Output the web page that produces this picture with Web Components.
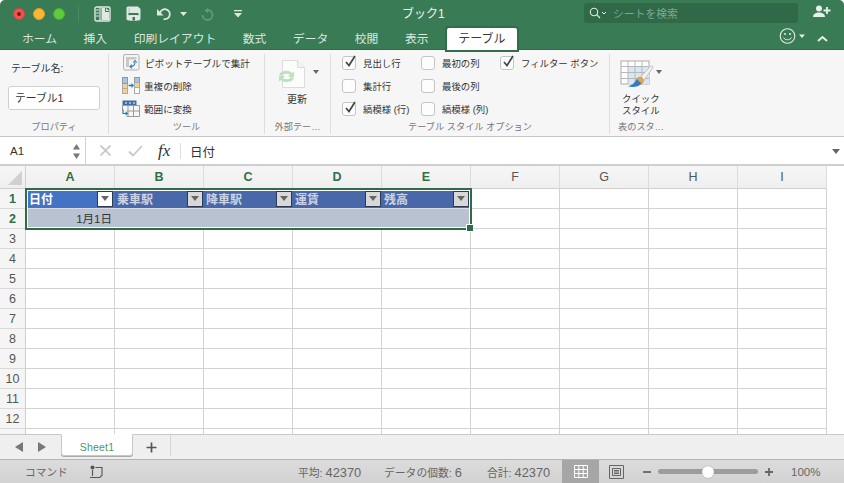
<!DOCTYPE html>
<html lang="ja">
<head>
<meta charset="utf-8">
<title>ブック1</title>
<style>
html, body { margin: 0; padding: 0; background: #fff; overflow: hidden; }
body { font-family: "Liberation Sans", "Noto Sans CJK JP", sans-serif; }
</style>
</head>
<body>
<xl-window>
  <xl-titlebar></xl-titlebar>
  <xl-tabs></xl-tabs>
  <xl-ribbon>
    <xl-group label="プロパティ" width="109">
      <xl-tablename></xl-tablename>
    </xl-group>
    <xl-group label="ツール" width="156">
      <xl-tools></xl-tools>
    </xl-group>
    <xl-group label="外部テー…" width="66">
      <xl-refresh></xl-refresh>
    </xl-group>
    <xl-group label="テーブル スタイル オプション" width="279">
      <xl-options></xl-options>
    </xl-group>
    <xl-group label="表のスタ…" width="62" last>
      <xl-quick></xl-quick>
    </xl-group>
  </xl-ribbon>
  <xl-formula></xl-formula>
  <xl-sheet></xl-sheet>
  <xl-sheetbar></xl-sheetbar>
  <xl-status></xl-status>
</xl-window>

<script>
const jp = `"Liberation Sans", "Noto Sans CJK JP", sans-serif`;

class XlWindow extends HTMLElement {
  constructor() {
    super();
    this.attachShadow({mode: "open"}).innerHTML = `
      <style>
        :host { display: flex; flex-direction: column; width: 844px; height: 483px; overflow: hidden;
                border-radius: 5px 5px 0 0; font-family: ${jp}; }
      </style>
      <slot></slot>`;
  }
}

class XlTitlebar extends HTMLElement {
  constructor() {
    super();
    this.attachShadow({mode: "open"}).innerHTML = `
      <style>
        :host { display: flex; align-items: center; height: 27px; flex: none; background: #387b54; color: #fff; position: relative; }
        .lights { display: flex; gap: 8px; margin-left: 13px; }
        .lights i { width: 12px; height: 12px; border-radius: 50%; display: flex; align-items: center; justify-content: center; box-sizing: border-box; }
        .r { background: #f2544d; border: 1px solid #d8453f; }
        .r::after { content: ""; width: 4px; height: 4px; border-radius: 50%; background: #7e1712; }
        .y { background: #fbb731; border: 1px solid #dc9f28; }
        .g { background: #5ecb3f; border: 1px solid #4aaf30; }
        .sep { width: 1px; height: 16px; background: #4a8a65; margin: 0 15px 0 13px; }
        svg { display: block; flex: none; }
        .title { position: absolute; left: 402px; top: 6px; font-size: 12px; line-height: 17px; color: #f0f5f2; }
        .search { position: absolute; left: 584px; top: 3px; width: 214px; height: 20px; border-radius: 3px; background: #2f6947; display: flex; align-items: center; box-sizing: border-box; padding-left: 5px; }
        .search span { margin-left: 6px; font-size: 10.800px; color: #7fa891; }
        .person { position: absolute; left: 813px; top: 5px; }
      </style>
      <div class="lights"><i class="r"></i><i class="y"></i><i class="g"></i></div>
      <div class="sep"></div>
      <svg width="17" height="16" viewBox="0 0 17 16"><rect x="1" y="1" width="15" height="14" rx="1.500" fill="none" stroke="#dfe9e3" stroke-width="1.400"/><path d="M6 1v14" stroke="#dfe9e3" stroke-width="1.200"/><path d="M2 4h3M2 7h3M2 10h3" stroke="#dfe9e3"/><path d="M7.500 2h4.500l3 3v9H7.500z" fill="#dfe9e3"/><path d="M11.500 2v3.500h3.500" fill="none" stroke="#387b54"/></svg>
      <svg style="margin-left:15px" width="15" height="15" viewBox="0 0 15 15"><path d="M.5 2A1.500 1.500 0 0 1 2 .5h10L14.500 3v9.500a2 2 0 0 1-2 2h-10a2 2 0 0 1-2-2z" fill="#dfe9e3"/><rect x="2.500" y="7" width="10" height="2.200" fill="#387b54"/><rect x="2.500" y="2" width="1" height="5" fill="#387b54" opacity=".3"/><rect x="4" y="9" width="7" height="5.500" fill="#dfe9e3"/><rect x="6.500" y="11" width="2.500" height="3.500" fill="#387b54"/></svg>
      <svg style="margin-left:15px" width="16" height="14" viewBox="0 0 16 14"><path d="M1 2v6.500h6.500z" fill="#dfe9e3"/><path d="M4 6a5 5 0 1 1 3.500 6" fill="none" stroke="#dfe9e3" stroke-width="1.800"/></svg>
      <svg style="margin-left:8px" width="7" height="4" viewBox="0 0 7 4"><path d="M0 0h7L3.500 4z" fill="#dfe9e3"/></svg>
      <svg style="margin-left:14px" width="13" height="14" viewBox="0 0 13 14"><path d="M7 1L3.500 3.500 7 6z" fill="#659a7c"/><path d="M6 3h1a5 5 0 1 1-5.500 5" fill="none" stroke="#659a7c" stroke-width="1.800"/></svg>
      <svg style="margin-left:20px" width="9" height="8" viewBox="0 0 9 8"><path d="M0 0h8v1.200H0z" fill="#dfe9e3"/><path d="M0 3h8L4 7.500z" fill="#dfe9e3"/></svg>
      <div class="title">ブック1</div>
      <div class="search">
        <svg width="18" height="12" viewBox="0 0 18 12"><circle cx="5" cy="5" r="3.700" fill="none" stroke="#e3ece7" stroke-width="1.100"/><path d="M7.700 7.700L11 11" stroke="#e3ece7" stroke-width="1.200"/><path d="M13 5l2 2 2-2" fill="none" stroke="#e3ece7"/></svg>
        <span>シートを検索</span>
      </div>
      <svg class="person" width="19" height="13" viewBox="0 0 19 13"><circle cx="6" cy="3.500" r="3" fill="#e8efeb"/><path d="M0 12c0-3 2.500-4.500 6-4.500S12 9 12 12z" fill="#e8efeb"/><path d="M14 2v7M10.500 5.500h7" stroke="#e8efeb" stroke-width="1.800"/></svg>`;
  }
}

class XlTabs extends HTMLElement {
  constructor() {
    super();
    const names = ["ホーム", "挿入", "印刷レイアウト", "数式", "データ", "校閲", "表示"];
    this.attachShadow({mode: "open"}).innerHTML = `
      <style>
        :host { display: block; height: 23px; flex: none; background: #387b54; position: relative; box-shadow: inset 0 -1px 0 #2f6a47; }
        .tabs { display: flex; height: 23px; font-size: 11.800px; line-height: 25px; color: #dbe7e0; padding-left: 22px; }
        .tabs span { white-space: nowrap; margin-right: 26.500px; }
        .tabs .on { margin: 1px 0 0 -8px; width: 70px; height: 22px; background: #fff; color: #3a3a3a; text-align: center; border-radius: 2px 2px 0 0; box-shadow: 0 0 0 2px #316d4a; font-size: 12px; line-height: 23px; }
        .smile { position: absolute; left: 779px; top: 0; }
        .chev { position: absolute; left: 817px; top: 8px; }
      </style>
      <div class="tabs">${names.map(n => `<span>${n}</span>`).join("")}<span class="on">テーブル</span></div>
      <svg class="smile" width="27" height="18" viewBox="0 0 27 18"><circle cx="8.500" cy="9" r="7.300" fill="none" stroke="#e4ede8" stroke-width="1.100"/><circle cx="6" cy="7" r="1" fill="#e4ede8"/><circle cx="11" cy="7" r="1" fill="#e4ede8"/><path d="M4.500 10.500c1.500 3 6.500 3 8 0" fill="none" stroke="#e4ede8"/><path d="M20 7.500h6L23 11z" fill="#e4ede8"/></svg>
      <svg class="chev" width="11" height="7" viewBox="0 0 11 7"><path d="M1 6l4.500-4 4.500 4" fill="none" stroke="#e4ede8" stroke-width="2"/></svg>`;
  }
}

class XlRibbon extends HTMLElement {
  constructor() {
    super();
    this.attachShadow({mode: "open"}).innerHTML = `
      <style>
        :host { display: flex; height: 87px; flex: none; box-sizing: border-box; background: #f6f6f6; border-bottom: 1px solid #c6c6c6; font-size: 10px; color: #333; }
      </style>
      <slot></slot>`;
  }
}

class XlGroup extends HTMLElement {
  constructor() {
    super();
    this.attachShadow({mode: "open"}).innerHTML = `
      <style>
        :host { display: flex; flex-direction: column; flex: none; box-sizing: border-box; width: ${this.getAttribute("width")}px; height: 80px; margin-top: 4px;
                border-right: ${this.hasAttribute("last") ? "0" : "1px solid #dedede"}; }
        .body { flex: 1; min-height: 0; }
        .label { height: 14px; line-height: 14px; text-align: center; font-size: 9.200px; color: #777; white-space: nowrap; }
      </style>
      <div class="body"><slot></slot></div>
      <div class="label">${this.getAttribute("label")}</div>`;
  }
}

class XlTablename extends HTMLElement {
  constructor() {
    super();
    this.attachShadow({mode: "open"}).innerHTML = `
      <style>
        :host { display: flex; flex-direction: column; padding: 7px 0 0 8px; }
        .cap { font-size: 10px; line-height: 16px; margin-left: 3px; color: #333; }
        .input { margin-top: 9px; width: 92px; height: 24px; box-sizing: border-box; background: #fff; border: 1px solid #d0d0d0; border-radius: 3px; font-size: 10.800px; line-height: 22px; padding-left: 6px; color: #333; }
      </style>
      <div class="cap">テーブル名:</div>
      <div class="input">テーブル1</div>`;
  }
}

class XlTools extends HTMLElement {
  constructor() {
    super();
    this.attachShadow({mode: "open"}).innerHTML = `
      <style>
        :host { display: flex; flex-direction: column; gap: 6px; padding: 0 0 0 13px; font-size: 9.600px; color: #333; }
        .row { display: flex; align-items: center; height: 17px; white-space: nowrap; }
        svg { flex: none; margin-right: 4px; display: block; }
      </style>
      <div class="row"><svg width="17" height="17" viewBox="0 0 17 17" style="margin-left:1px;margin-right:5px"><rect x="0.500" y="0.500" width="15.500" height="15.500" rx="1.500" fill="#f4f4f4" stroke="#b0b0b0"/><path d="M3 3h10.500v2.500H6V13H3z" fill="#c9c9c9"/><path d="M7.500 12.500c2.500 0 4.500-1.500 4.500-4.500" fill="none" stroke="#2a7ab8" stroke-width="1.100"/><path d="M10.200 8.500L12 6.500l1.800 2M9 10.700L7 12.500l2 1.800" fill="none" stroke="#2a7ab8" stroke-width="1.100"/></svg><span>ピボットテーブルで集計</span></div>
      <div class="row"><svg width="18" height="17" viewBox="0 0 18 17"><rect x="0.500" y="0.500" width="5" height="16" fill="#f1d28f" stroke="#aaa"/><rect x="0.500" y="0.500" width="5" height="6" fill="#a9c5e3" stroke="#89a"/><path d="M0.500 11.500h5" stroke="#aaa"/><rect x="12.500" y="0.500" width="5" height="16" fill="#fff" stroke="#aaa"/><rect x="12.500" y="0.500" width="5" height="5" fill="#a9c5e3" stroke="#89a"/><rect x="12.500" y="5.500" width="5" height="5" fill="#f1d28f" stroke="#aaa"/><path d="M6.500 8.500H10" stroke="#2a7ab8" stroke-width="1.500"/><path d="M9.500 6L12 8.500 9.500 11z" fill="#2a7ab8"/></svg><span>重複の削除</span></div>
      <div class="row"><svg width="18" height="17" viewBox="0 0 18 17"><rect x="0.500" y="0.500" width="14" height="5" fill="#3f6fa9"/><path d="M3 3h2M7 3h2M11 3h2" stroke="#fff"/><path d="M0.500 5.500h17v11h-13M0.500 5.500v5M17.500 11h-13M6 5.500v11M11.500 5.500v11" fill="none" stroke="#999"/><path d="M1 9.500v4h3" fill="none" stroke="#2a7ab8" stroke-width="1.200"/><path d="M3.500 11.500l3 2-3 2z" fill="#2a7ab8"/></svg><span>範囲に変換</span></div>`;
  }
}

class XlRefresh extends HTMLElement {
  constructor() {
    super();
    this.attachShadow({mode: "open"}).innerHTML = `
      <style>
        :host { display: flex; flex-direction: column; align-items: flex-start; padding-top: 6px; font-size: 10px; color: #333; position: relative; }
        .icon { margin-left: 13px; }
        .caret { position: absolute; left: 48px; top: 16px; }
        span { margin: 2px 0 0 22px; line-height: 17px; }
      </style>
      <svg class="icon" width="28" height="29" viewBox="0 0 28 29"><path d="M4.500 0.500h15l7 7v20h-22z" fill="#fdfdfd" stroke="#dcdcdc"/><path d="M19.500 0.500v7h7" fill="#f3f3f3" stroke="#dcdcdc"/><path d="M1 15c1.500-4 9-6 13-2l2-1.500V17H10l2-2c-3-2-6.500-1.500-8 1z" fill="#bfe0bc"/><path d="M16 18c-1.500 4-9 6-13 2l-2 1.500V16h6l-2 2c3 2 6.500 1.500 8-1z" fill="#bfe0bc"/></svg>
      <svg class="caret" width="6" height="4" viewBox="0 0 6 4"><path d="M0 0h6L3 4z" fill="#666"/></svg>
      <span>更新</span>`;
  }
}

class XlCheck extends HTMLElement {
  constructor() {
    super();
    this.attachShadow({mode: "open"}).innerHTML = `
      <style>
        :host { display: flex; align-items: center; height: 17px; white-space: nowrap; font-size: 9.400px; color: #333; width: 79px; }
        .box { position: relative; width: 14px; height: 14px; box-sizing: border-box; flex: none; background: #fdfdfd; border: 1px solid #c4c4c4; border-radius: 3px; margin-right: 7px; }
        svg { position: absolute; left: 1px; top: -3px; }
      </style>
      <div class="box">${this.hasAttribute("on") ? `<svg width="13" height="14" viewBox="0 0 13 14"><path d="M2 8l3 3.500L11 2" fill="none" stroke="#444" stroke-width="1.700"/></svg>` : ""}</div>
      <span><slot></slot></span>`;
  }
}

class XlOptions extends HTMLElement {
  constructor() {
    super();
    this.attachShadow({mode: "open"}).innerHTML = `
      <style>
        :host { display: grid; grid-template-columns: 79px 79px auto; row-gap: 6px; padding-left: 11px; }
      </style>
      <slot></slot>`;
    this.innerHTML = `
      <xl-check on>見出し行</xl-check><xl-check>最初の列</xl-check><xl-check on style="width:auto">フィルター ボタン</xl-check>
      <xl-check>集計行</xl-check><xl-check>最後の列</xl-check><span></span>
      <xl-check on>縞模様 (行)</xl-check><xl-check>縞模様 (列)</xl-check><span></span>`;
  }
}

class XlQuick extends HTMLElement {
  constructor() {
    super();
    this.attachShadow({mode: "open"}).innerHTML = `
      <style>
        :host { display: flex; flex-direction: column; align-items: flex-start; padding-top: 6px; font-size: 9.400px; color: #333; position: relative; }
        .icon { margin-left: 10px; }
        .caret { position: absolute; left: 46px; top: 16px; }
        span { line-height: 11.500px; text-align: center; margin: 3px 0 0 12px; white-space: nowrap; }
      </style>
      <svg class="icon" width="34" height="30" viewBox="0 0 34 30">
        <rect x="1" y="1" width="28" height="23" fill="#fff" stroke="#aaa"/>
        <rect x="8" y="7" width="21" height="17" fill="#d9e6f5"/>
        <path d="M1 6.500h28M1 12.500h28M1 18.500h28M8 1v23M15 1v23M22 1v23" stroke="#b8b8b8"/>
        <path d="M20 17.500L30.500 6.500c1.500-1.200 3-.2 2.200 1.500L23.500 21z" fill="#f2f2f2" stroke="#aaa" stroke-width=".700"/>
        <circle cx="20" cy="20.500" r="3.800" fill="#dfa452"/>
        <path d="M16.500 19c-1 3-3.500 6-8.500 7.500 5 1 11 .5 13.500-3z" fill="#2f7bc4"/>
      </svg>
      <svg class="caret" width="6" height="4" viewBox="0 0 6 4"><path d="M0 0h6L3 4z" fill="#666"/></svg>
      <span>クイック<br>スタイル</span>`;
  }
}

class XlFormula extends HTMLElement {
  constructor() {
    super();
    this.attachShadow({mode: "open"}).innerHTML = `
      <style>
        :host { display: flex; align-items: center; height: 29px; flex: none; box-sizing: border-box; background: #fff; border-bottom: 2px solid #cfcfcf; font-size: 12.500px; color: #333; position: relative; }
        .name { width: 86px; height: 27px; box-sizing: border-box; padding-left: 10px; line-height: 29px; border-right: 1px solid #d4d4d4; position: relative; flex: none; font-size: 11.500px; }
        .step { position: absolute; left: 72px; top: 6px; }
        .bar { flex: none; margin-left: 14px; display: flex; align-items: center; }
        .fx { font-family: "Liberation Serif", serif; font-style: italic; font-size: 17px; margin-left: 15px; color: #333; width: 18px; line-height: 20px; }
        .v { width: 1px; height: 16px; background: #ddd; margin: 0 9px 0 4px; flex: none; }
        .val { padding-top: 1px; }
        .caret { position: absolute; left: 832px; top: 12px; }
      </style>
      <div class="name">A1<svg class="step" width="9" height="17" viewBox="0 0 9 17"><path d="M4.500 1L8 6.500H1z" fill="#777"/><path d="M4.500 16L8 10.500H1z" fill="#777"/></svg></div>
      <div class="bar">
        <svg width="11" height="11" viewBox="0 0 11 11"><path d="M.5.500l10 10M10.500.5l-10 10" stroke="#c8c8c8" stroke-width="1.800"/></svg>
        <svg style="margin-left:17px" width="15" height="12" viewBox="0 0 15 12"><path d="M1 6.500L5 10.500 14 1" fill="none" stroke="#c8c8c8" stroke-width="1.800"/></svg>
      </div>
      <span class="fx">fx</span><div class="v"></div>
      <span class="val">日付</span>
      <svg class="caret" width="8" height="5" viewBox="0 0 8 5"><path d="M0 0h8L4 5z" fill="#666"/></svg>`;
  }
}

class XlSheet extends HTMLElement {
  constructor() {
    super();
    const cols = "ABCDEFGHI".split("");
    const heads = ["乗車駅", "降車駅", "運賃", "残高"];
    let cells = `<div class="corner"><svg width="16" height="16" viewBox="0 0 16 16"><path d="M15 1v14H1z" fill="#d0d0d0"/></svg></div>`;
    cols.forEach((c, i) => { cells += `<div class="ch ${i < 5 ? "hot" : ""}">${c}</div>`; });
    for (let r = 1; r <= 13; r++) {
      cells += `<div class="rh ${r < 3 ? "hot" : ""}">${r}</div>`;
      cols.forEach((c, i) => {
        if (r === 1 && i < 5) {
          const text = i === 0 ? "日付" : heads[i - 1];
          const cls = i === 0 ? "drop active" : i === 4 ? "drop end" : "drop";
          cells += `<div class="th ${i === 0 ? "first" : ""}">${text}<i class="${cls}"></i></div>`;
        } else if (r === 2 && i < 5) {
          cells += `<div class="tb">${i === 0 ? "1月1日" : ""}</div>`;
        } else {
          cells += `<div class="c"></div>`;
        }
      });
    }
    this.attachShadow({mode: "open"}).innerHTML = `
      <style>
        :host { display: block; height: 268px; flex: none; overflow: hidden; position: relative; background: #fff; }
        .grid { display: grid; grid-template-columns: 26px repeat(9, 89px); grid-template-rows: 23px 20px repeat(12, 20px); font-size: 12px; color: #333; }
        .corner, .ch, .rh { background: linear-gradient(#f6f6f6, #efefef); box-sizing: border-box; }
        .corner { border-right: 1px solid #cfcfcf; border-bottom: 1px solid #cfcfcf; display: flex; justify-content: flex-end; align-items: flex-end; padding: 0 2px 2px 0; }
        .ch { border-right: 1px solid #dcdcdc; border-bottom: 1px solid #cfcfcf; text-align: center; line-height: 22px; font-size: 12.500px; color: #555; }
        .ch.hot { color: #2f7047; font-weight: bold; }
        .rh { background: #f5f5f5; border-right: 1px solid #cfcfcf; border-bottom: 1px solid #d9d9d9; text-align: center; line-height: 21px; color: #555; font-size: 12.500px; }
        .rh.hot { color: #2f7047; font-weight: bold; }
        .c { box-sizing: border-box; border-right: 1px solid #d2d2d2; border-bottom: 1px solid #d2d2d2; }
        .th { box-sizing: border-box; background: #4868a9; color: #ccd3e2; font-weight: bold; display: flex; align-items: center; padding-left: 2px; font-size: 12px; position: relative; border-bottom: 1px solid #d8dce6; }
        .th.first { background: #4472c4; color: #fff; padding-left: 3px; }
        .tb { box-sizing: border-box; background: #bac1d0; text-align: right; padding-right: 3px; line-height: 20px; font-size: 11.500px; color: #333; }
        .drop { position: absolute; right: 1px; top: 2px; width: 16px; height: 16px; box-sizing: border-box; background: #d8d8d8; border: 1px solid #2d3a55; }
        .drop::after { content: ""; position: absolute; left: 2.500px; top: 4px; border: 4.500px solid transparent; border-top: 5px solid #666; border-bottom: 0; }
        .drop.active { background: #fff; right: 2px; }
        .drop.end { right: 2px; }
        .sel { position: absolute; left: 25px; top: 22px; width: 447px; height: 42px; box-sizing: border-box; border: 2px solid #2f6b48; box-shadow: inset 0 0 0 1px #fff; pointer-events: none; }
        .knob { position: absolute; right: -3px; bottom: -3px; width: 6px; height: 6px; background: #2f6b48; border: 1px solid #fff; margin: -1px; }
      </style>
      <div class="grid">${cells}</div>
      <div class="sel"><div class="knob"></div></div>`;
  }
}

class XlSheetbar extends HTMLElement {
  constructor() {
    super();
    this.attachShadow({mode: "open"}).innerHTML = `
      <style>
        :host { display: flex; align-items: flex-start; height: 26px; flex: none; box-sizing: border-box; background: #efefef; border-top: 1px solid #c8c8c8; border-bottom: 1px solid #b4b4b4; }
        .nav { display: flex; gap: 15px; padding: 7px 0 0 15px; width: 61px; box-sizing: border-box; flex: none; }
        .tab { width: 72px; height: 22px; margin-top: -1px; box-sizing: border-box; flex: none; background: #fff; border: 1px solid #c8c8c8; border-top-color: #fff; border-radius: 0 0 3px 3px; color: #53936d; font-size: 10.500px; line-height: 22px; text-align: center; padding-top: 1px; box-shadow: 0 1px 0 #aaa; letter-spacing: .2px; }
        .add { width: 38px; height: 21px; box-sizing: border-box; border-right: 1px solid #d5d5d5; display: flex; justify-content: center; padding-top: 7px; flex: none; }
      </style>
      <div class="nav">
        <svg width="8" height="10" viewBox="0 0 8 10"><path d="M8 0v10L0 5z" fill="#777"/></svg>
        <svg width="8" height="10" viewBox="0 0 8 10"><path d="M0 0v10l8-5z" fill="#777"/></svg>
      </div>
      <div class="tab">Sheet1</div>
      <div class="add"><svg width="11" height="11" viewBox="0 0 11 11"><path d="M5.500.5v10M.5 5.500h10" stroke="#555" stroke-width="1.700"/></svg></div>`;
  }
}

class XlStatus extends HTMLElement {
  constructor() {
    super();
    this.attachShadow({mode: "open"}).innerHTML = `
      <style>
        :host { display: flex; align-items: center; flex: 1; min-height: 0; background: linear-gradient(#dcdcdc, #d2d2d2); font-size: 10.800px; color: #666; white-space: nowrap; }
        .cmd { margin-left: 25px; font-size: 10.700px; width: 43px; flex: none; }
        .rec { margin-left: 21px; flex: none; }
        .stats { margin-left: 193px; display: grid; grid-template-columns: 86px 103px 75px; flex: none; }
        .stats b { font-weight: normal; font-size: 12.800px; }
        .view { height: 23px; display: flex; align-items: center; justify-content: center; flex: none; }
        .view.on { width: 37px; background: #a6a6a6; }
        .view.page { width: 35px; }
        .zoom { display: flex; align-items: center; margin-left: 9px; flex: none; }
        .track { position: relative; width: 100px; height: 5px; border-radius: 3px; background: #9d9d9d; margin: 0 7px; }
        .track i { position: absolute; left: 44px; top: -3.500px; width: 12px; height: 12px; border-radius: 50%; background: #fff; box-shadow: 0 0 1px #777; }
        .pct { margin-left: 18px; font-size: 11.500px; }
      </style>
      <span class="cmd">コマンド</span>
      <svg class="rec" width="16" height="14" viewBox="0 0 16 14"><circle cx="3.500" cy="2.500" r="2" fill="#555"/><path d="M3.500 5v6M1 12.500h10M6.500 2.500H13v8.500M11.500 11v1.500M13 11h-1.500" fill="none" stroke="#555" stroke-width="1.100"/></svg>
      <div class="stats"><span>平均: <b>42370</b></span><span>データの個数: <b>6</b></span><span>合計: <b>42370</b></span></div>
      <div class="view on"><svg width="14" height="13" viewBox="0 0 14 13"><path d="M.5.500h13v12H.5zM.5 4.500h13M.5 8.500h13M4.800.5v12M9.200.5v12" fill="none" stroke="#fff"/></svg></div>
      <div class="view page"><svg width="15" height="14" viewBox="0 0 15 14"><path d="M.5.500h14v13H.5z" fill="none" stroke="#666"/><path d="M3.500 3.500h8v7h-8zM5 5.500h5M5 7h5M5 8.500h5" fill="none" stroke="#666"/></svg></div>
      <div class="zoom">
        <svg width="8" height="8" viewBox="0 0 8 8"><path d="M0 4h8" stroke="#666" stroke-width="1.800"/></svg>
        <div class="track"><i></i></div>
        <svg width="8" height="8" viewBox="0 0 8 8"><path d="M0 4h8M4 0v8" stroke="#666" stroke-width="1.800"/></svg>
      </div>
      <span class="pct">100%</span>`;
  }
}

customElements.define("xl-window", XlWindow);
customElements.define("xl-titlebar", XlTitlebar);
customElements.define("xl-tabs", XlTabs);
customElements.define("xl-ribbon", XlRibbon);
customElements.define("xl-group", XlGroup);
customElements.define("xl-tablename", XlTablename);
customElements.define("xl-tools", XlTools);
customElements.define("xl-refresh", XlRefresh);
customElements.define("xl-check", XlCheck);
customElements.define("xl-options", XlOptions);
customElements.define("xl-quick", XlQuick);
customElements.define("xl-formula", XlFormula);
customElements.define("xl-sheet", XlSheet);
customElements.define("xl-sheetbar", XlSheetbar);
customElements.define("xl-status", XlStatus);
</script>
</body>
</html>
